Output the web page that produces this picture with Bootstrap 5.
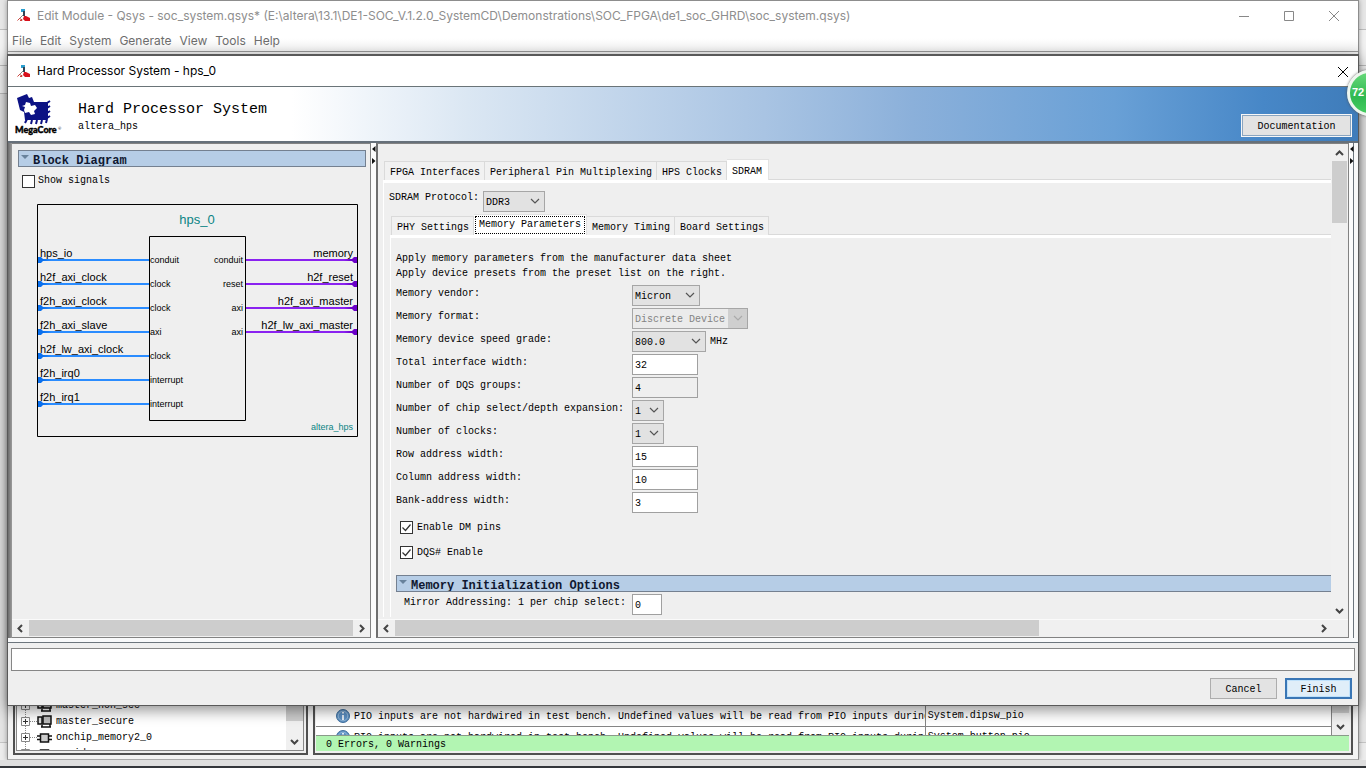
<!DOCTYPE html>
<html lang="en">
<head>
<meta charset="utf-8">
<meta name="viewport" content="width=device-width, initial-scale=1">
<title>Hard Processor System - hps_0</title>
<link href="https://cdn.jsdelivr.net/npm/bootstrap@5.3.0/dist/css/bootstrap.min.css" rel="stylesheet">
<style>
  :root { --face: #efefef; --line: #828282; }
  body { height: 100vh; overflow: hidden; background: #e9e9e9; color: #000;
         font: 10px/14px "Liberation Mono", monospace; }
  button, input, select { font: inherit; color: inherit; }
  .ui-font { font-family: Inter, "Noto Sans", sans-serif; font-size: 12px; line-height: 20px; }

  /* strip of the window behind, either side of the main one */
  .backdrop { background: linear-gradient(#e6e6e6 29px, #bdbdbd 29px 30px, #f1f1f1 30px 65px, #bdbdbd 65px 66px, #f1f1f1 66px 93px, #bdbdbd 93px 94px, #e4e4e4 94px 742px, #c4c4c4 742px 743px, #ececec 743px); }
  .taskbar { height: 2px; background: #33363a; }
  .under { height: 6px; background: #dedede; }

  .main-window { margin: 0 7px; background: #f3f3f3; border: 1px solid #8d8d8d; border-bottom-color: #a9a9a9; box-shadow: 0 0 5px rgba(0,0,0,.35); }
  .main-head { background: #fff; color: #8e8e8e; }
  .caption-bar { height: 29px; padding-left: 9px; }
  .caption-icon { width: 13px; height: 13px; margin-right: 7px; }
  .menu-bar { height: 22px; gap: 8px; padding-left: 4px; border-bottom: 1px solid #999; background: linear-gradient(#fff 8px, #f3f3f3); }
  .menu-bar a { color: #6d6d6d; text-decoration: none; }
  .win-btn { width: 45px; height: 28px; border: 0; background: none; padding: 0; }
  .win-btn:last-child { margin-right: 2px; }
  .dock { height: 70px; padding: 0 5px 4px; gap: 5px; }
  .dock-pane { border: 2px solid #505050; border-width: 1px 2px 2px; padding: 1px 2px 2px 1px; background: var(--face); }
  .tree-pane { width: 295px; flex: none; }
  .tree-box { background: #fff; border: 1px solid #888; border-top: 0; }
  .tree-list { margin: 7px 0 0; padding: 0 0 0 4px; }
  .tree-list li { height: 16px; }
  .tree-list svg:last-of-type { margin-right: 4px; }
  .msg-area { padding-top: 14px; }
  .msg-table { border-collapse: collapse; table-layout: fixed; background: #fff; }
  .msg-table td { height: 21px; border: 1px solid #858585; padding: 0 0 0 2px; white-space: nowrap; overflow: hidden; }
  .msg-table td:first-child { padding-left: 20px; border-left: 0; }
  .status-ok { height: 16px; background: #b2f5b2; padding-left: 10px; line-height: 17px; border-top: 1px solid #8a9a8a; }

  .dialog-window { left: 7px; right: 7px; top: 54px; bottom: 62px; border: 1px solid #595959; border-top-width: 2px; background: var(--face); box-shadow: 0 4px 14px rgba(0,0,0,.45); }
  .dialog-caption { height: 30px; background: #fff; padding-left: 9px; }
  .close-btn { width: 30px; height: 30px; border: 0; background: none; padding: 0; }
  .banner { height: 57px; border-top: 1px solid #6a7478; border-bottom: 2px solid #66707a;
    background: linear-gradient(90deg, #fff 21%, #dbe7f3 34%, #a9c4e3 56%, #8bb0da 67%, #69a0d6 82%, #4787c7 93%, #3f7cba); }
  .banner-logo { width: 52px; height: 54px; margin: 0 14px 0 4px; }
  .banner-text { padding-top: 13px; }
  .banner-title { font-size: 15px; line-height: 20px; }
  .push { height: 23px; background: #e3e3e3; border: 1px solid #adadad; border-radius: 0; padding: 2px 0 0; }
  .push-doc { width: 111px; margin: 0 6px 4px 0; border: 1px solid #f7f7f7; outline: 1px solid #8aa5c0; outline-offset: -2px; }
  .push-end { width: 67px; height: 21px; }
  .push-default { background: #e0eef9; border: 2px solid #3a76b5; outline: 1px solid #bfe1fb; outline-offset: -3px; }

  .work { background: #f8f8f8; }
  .work-rail { width: 4px; background: linear-gradient(90deg, #6c6c6c, #9c9c9c); }
  .left-pane { width: 359px; border: 1px solid var(--line); border-left: 0; background: var(--face); }
  .left-body { padding: 6px 4px 0 6px; }
  .show-row { gap: 3px; margin: 7px 0 0 4px; }
  .diagram { margin: 16px 0 0 19px; }
  .splitter { width: 5px; background: #fbfbfb; padding-top: 2px; }
  .right-pane { min-width: 0; border: 1px solid var(--line); border-left: 2px solid #6f6f6f; background: var(--face); }
  .right-body { padding: 14px 0 0 5px; }
  .group-head { height: 17px; border: 1px solid #748090; background: #b6cde6; overflow: hidden; padding-left: 14px; font-size: 12px; line-height: 20px; font-weight: 700; color: #101830; position: relative; margin: 0; }
  .group-head::before { content: ""; position: absolute; left: 2px; top: 4px; border: 4px solid transparent; border-top-color: #68829c; border-bottom: 0; }
  .group-open { border-right: 0; margin-top: 10px; margin-bottom: 2px; }
  .tick { appearance: none; width: 13px; height: 13px; border: 1px solid #333; background: #fff; margin: 0; flex: none; }
  .tick:checked { background: #fff url("data:image/svg+xml,%3Csvg xmlns='http://www.w3.org/2000/svg' width='11' height='11'%3E%3Cpath d='M1.5 5.5l3 3 5-6' fill='none' stroke='%23333' stroke-width='1.2'/%3E%3C/svg%3E"); }
  .sb { background: #f0f0f0; }
  .sb-h { height: 18px; border-top: 1px solid #fafafa; padding-bottom: 1px; }
  .sb-v { width: 17px; }
  .sb-btn { width: 17px; height: 17px; flex: none; }
  .sb-thumb { background: #cdcdcd; }
  .thumb-wide { width: 70%; }
  .thumb-short { height: 62px; margin: 0 1px; }

  .tabs-row { height: 21px; border: 0; padding-left: 1px; flex-wrap: nowrap; }
  .tabs-row .nav-link { border: 1px solid #dadada; border-left: 0; border-bottom: 0; border-radius: 0; height: 19px; padding: 2px 4px 0 5px; color: #000; background: #f1f1f1; white-space: nowrap; line-height: 17px; }
  .tabs-row li:first-child .nav-link { border-left: 1px solid #dadada; }
  .tabs-row .nav-link.active { height: 21px; background: #fff; padding-right: 6px; color: #000; border-color: #e2e2e2; }
  .tabs-row .nav-link.focus-tab { padding: 0 1px; }
  .focus-tab span { display: block; border: 1px dotted #000; padding: 0 3px; height: 18px; line-height: 16px; }
  .tab-page { border-top: 1px solid #dadada; border-left: 1px solid #fff; }
  .tab-band { height: 3px; background: #fff; }
  .proto-row { padding: 8px 0 0 5px; gap: 4px; }
  .sub-tabs { padding-left: 6px; margin-top: 1px; }
  .sub-body { padding-left: 5px; }
  .intro { margin: 0 0 4px; padding-top: 13px; line-height: 15px; }
  .drop { appearance: none; height: 21px; border: 1px solid #a6a6a6; border-radius: 0; padding: 2px 0 0 2px; width: 100%;
    background: #e2e2e2 url("data:image/svg+xml,%3Csvg xmlns='http://www.w3.org/2000/svg' width='10' height='7'%3E%3Cpath d='M1 1l4 4 4-4' fill='none' stroke='%23555' stroke-width='1.2'/%3E%3C/svg%3E") no-repeat right 4px center; }
  .drop:disabled { color: #838383; opacity: 1; background-color: #cfcfcf; box-shadow: inset 95px 0 0 #ebebeb;
    background-image: url("data:image/svg+xml,%3Csvg xmlns='http://www.w3.org/2000/svg' width='10' height='7'%3E%3Cpath d='M1 1l4 4 4-4' fill='none' stroke='%23aaa' stroke-width='1.2'/%3E%3C/svg%3E"); }
  .field { height: 21px; border: 1px solid #a0a0a0; border-radius: 0; padding: 2px 0 0 2px; background: #fff; width: 66px; }
  .field[readonly] { background: var(--face); }
  .param { display: grid; grid-template-columns: 236px auto; height: 23px; }
  .param label { line-height: 18px; }
  .w-short { width: 32px; } .w-mid { width: 68px; } .w-proto { width: 62px; } .w-speed { width: 74px; } .w-format { width: 116px; }
  .field.w-short { width: 30px; }
  .check-row { height: 25px; padding-left: 4px; gap: 4px; }
  .dialog-foot { padding: 5px 3px 6px; }
  .log-box { height: 23px; border: 1px solid #868686; background: #fff; border-radius: 0; width: 100%; display: block; }
  .foot-btns { padding: 7px 3px 0 0; }
  .speed-ball { right: -27px; top: 70px; width: 46px; height: 46px; border-radius: 50%; border: 3px solid #eef6ee; background: linear-gradient(#66d878, #2fb951 60%, #45cc60); box-shadow: 0 0 3px #555; color: #fff; font: 700 11px/38px "Liberation Sans", sans-serif; padding-left: 2px; }
  .edge-clip { inset: 0; overflow: hidden; pointer-events: none; }
</style>
</head>
<body class="d-flex flex-column backdrop position-relative">

<!-- reusable drawings -->
<svg width="0" height="0" class="position-absolute" aria-hidden="true">
  <symbol id="i-app" viewBox="0 0 13 13"><path d="M4 0h4v3H4z" fill="#2a9fd0"/><path d="M6 2h2v5H6z" fill="#345"/><path d="M6 6 2 10" stroke="#888"/><path d="M7 7h2l4 2v3H8l-2-2z" fill="#d8101c"/><path d="M.5 11.500l2-2 3 1.500M3 11.500h2" fill="none" stroke="#d04038"/></symbol>
  <symbol id="i-x" viewBox="0 0 12 12"><path d="M1 1l10 10M11 1 1 11" fill="none" stroke="currentColor"/></symbol>
  <symbol id="i-l" viewBox="0 0 17 17"><path d="M10 5 6.5 8.500 10 12" fill="none" stroke="#444" stroke-width="2"/></symbol>
  <symbol id="i-r" viewBox="0 0 17 17"><path d="M7 5l3.500 3.500L7 12" fill="none" stroke="#444" stroke-width="2"/></symbol>
  <symbol id="i-u" viewBox="0 0 17 17"><path d="M5 11l3.500-3.500L12 11" fill="none" stroke="#444" stroke-width="2"/></symbol>
  <symbol id="i-d" viewBox="0 0 17 17"><path d="M5 7l3.500 3.500L12 7" fill="none" stroke="#444" stroke-width="2"/></symbol>
  <symbol id="i-plus" viewBox="0 0 16 16"><path d="M4.500 0v16M9 7.500h7" stroke="#888" stroke-dasharray="1 1"/><path d="M.5 3.500h8v8h-8z" fill="#fff" stroke="#888"/><path d="M2 7.500h5M4.500 5v5" stroke="#333"/></symbol>
  <symbol id="i-master" viewBox="0 0 15 14"><path d="M1 2h4v7H1z" fill="#ddd" stroke="#111" stroke-width="1.500"/><path d="M6 1h8v8H6z" fill="#bbb" stroke="#111" stroke-width="1.500"/><path d="M4 12h10M5 10v2M13 9v3" fill="none" stroke="#111" stroke-width="1.500"/></symbol>
  <symbol id="i-chip" viewBox="0 0 15 14"><path d="M0 5h15M0 8.500h15" stroke="#111" stroke-width="1.500"/><path d="M3.500 3h8v8h-8z" fill="#ccc" stroke="#111" stroke-width="1.500"/></symbol>
  <symbol id="i-info" viewBox="0 0 14 14"><circle cx="7" cy="7" r="6.500" fill="#5b8fc2" stroke="#42719f"/><circle cx="7" cy="7" r="4.800" fill="none" stroke="#a9c8e4" stroke-width=".7"/><path d="M7 3v1.500M7 6v5" stroke="#fff" stroke-width="1.600"/></symbol>
  <symbol id="i-split" viewBox="0 0 5 20"><path d="M4.500 1v6L1 4zM1 13v6l3.500-3z" fill="#111"/></symbol>
</svg>

<div class="main-window flex-grow-1 d-flex flex-column">
  <div class="main-head ui-font">
    <div class="caption-bar d-flex align-items-center">
      <svg class="caption-icon"><use href="#i-app"/></svg>
      <span class="flex-grow-1">Edit Module - Qsys - soc_system.qsys* (E:\altera\13.1\DE1-SOC_V.1.2.0_SystemCD\Demonstrations\SOC_FPGA\de1_soc_GHRD\soc_system.qsys)</span>
      <button class="win-btn" aria-label="Minimize"><svg width="12" height="12"><path d="M1 6.500h10" stroke="#888"/></svg></button>
      <button class="win-btn" aria-label="Maximize"><svg width="12" height="12"><path d="M1.500 1.500h9v9h-9z" fill="none" stroke="#888"/></svg></button>
      <button class="win-btn" aria-label="Close main window"><svg width="12" height="12" color="#888"><use href="#i-x"/></svg></button>
    </div>
    <nav class="menu-bar d-flex align-items-center">
      <a href="#">File</a><a href="#">Edit</a><a href="#">System</a><a href="#">Generate</a><a href="#">View</a><a href="#">Tools</a><a href="#">Help</a>
    </nav>
  </div>
  <div class="flex-grow-1"></div>
  <div class="dock d-flex">
    <div class="dock-pane tree-pane">
      <div class="tree-box d-flex h-100 overflow-hidden">
        <ul class="tree-list list-unstyled flex-grow-1">
          <li class="d-flex align-items-center"><svg width="16" height="16"><use href="#i-plus"/></svg><svg width="15" height="14"><use href="#i-master"/></svg>master_non_sec</li>
          <li class="d-flex align-items-center"><svg width="16" height="16"><use href="#i-plus"/></svg><svg width="15" height="14"><use href="#i-master"/></svg>master_secure</li>
          <li class="d-flex align-items-center"><svg width="16" height="16"><use href="#i-plus"/></svg><svg width="15" height="14"><use href="#i-chip"/></svg>onchip_memory2_0</li>
          <li class="d-flex align-items-center"><svg width="16" height="16"><use href="#i-plus"/></svg><svg width="15" height="14"><use href="#i-chip"/></svg>sysid_qsys</li>
        </ul>
        <div class="sb sb-v d-flex flex-column justify-content-between h-100"><div class="sb-thumb h-50"></div><svg class="sb-btn"><use href="#i-d"/></svg></div>
      </div>
    </div>
    <div class="dock-pane flex-grow-1 d-flex flex-column">
      <div class="flex-grow-1 d-flex overflow-hidden">
        <div class="msg-area flex-grow-1 overflow-hidden">
          <table class="msg-table w-100 mb-0">
            <colgroup><col style="width:60%"><col style="width:40%"></colgroup>
            <tr><td><svg width="14" height="14" class="me-1"><use href="#i-info"/></svg>PIO inputs are not hardwired in test bench. Undefined values will be read from PIO inputs during simulation.</td><td>System.dipsw_pio</td></tr>
            <tr><td><svg width="14" height="14" class="me-1"><use href="#i-info"/></svg>PIO inputs are not hardwired in test bench. Undefined values will be read from PIO inputs during simulation.</td><td>System.button_pio</td></tr>
          </table>
        </div>
        <div class="sb sb-v d-flex flex-column justify-content-between"><div class="sb-thumb h-50"></div><svg class="sb-btn"><use href="#i-d"/></svg></div>
      </div>
      <div class="status-ok">0 Errors, 0 Warnings</div>
    </div>
  </div>
</div>
<div class="under"></div>
<div class="taskbar"></div>

<div class="dialog-window position-absolute d-flex flex-column" role="dialog" aria-label="Hard Processor System">
  <div class="dialog-caption ui-font d-flex align-items-center">
    <svg class="caption-icon"><use href="#i-app"/></svg>
    <span class="flex-grow-1">Hard Processor System - hps_0</span>
    <button class="close-btn" aria-label="Close"><svg width="12" height="12"><use href="#i-x"/></svg></button>
  </div>
  <header class="banner d-flex">
    <svg class="banner-logo" viewBox="0 0 52 54" role="img" aria-label="MegaCore">
      <path d="M5 11l10-4 2 4 3-1 2 5h14v17l-2 1H13l-1-8-4-2z" fill="#0c1284"/>
      <path d="M10 19l3-1 1-3 4 1 1 3 4-1 2 3-3 3 1 3-4 1-2-3-4 1-1-3 1-3z" fill="#fff"/>
      <path d="M35 16l3-2M35 21l3-2M35 26l3-2M35 31l3-2M15 32l-2 4M20 33l-1 4M25 33l-1 4M30 33l-1 4M35 32l-1 4" stroke="#0c1284" stroke-width="2"/>
      <text x="3" y="46" font-family="Lato, sans-serif" font-weight="900" font-size="9" stroke="#000" stroke-width=".4">MegaCore</text><text x="46" y="43" font-family="Lato, sans-serif" font-size="4">®</text>
    </svg>
    <div class="banner-text flex-grow-1">
      <h1 class="banner-title fw-normal m-0">Hard Processor System</h1>
      <div>altera_hps</div>
    </div>
    <button class="push push-doc align-self-end">Documentation</button>
  </header>

  <main class="work d-flex flex-grow-1 overflow-hidden">
    <div class="work-rail"></div>
    <section class="left-pane d-flex flex-column">
      <div class="left-body flex-grow-1 overflow-hidden">
        <h2 class="group-head">Block Diagram</h2>
        <div class="show-row d-flex align-items-center"><input type="checkbox" class="tick" id="showSignals"><label for="showSignals">Show signals</label></div>
        <svg id="diagram" class="diagram d-block" width="322" height="234" role="img" aria-label="hps_0 block diagram" font-family="Liberation Sans, sans-serif"></svg>
      </div>
      <div class="sb sb-h d-flex"><svg class="sb-btn"><use href="#i-l"/></svg><div class="sb-thumb flex-grow-1"></div><svg class="sb-btn"><use href="#i-r"/></svg></div>
    </section>
    <div class="splitter"><svg width="5" height="20"><use href="#i-split"/></svg></div>
    <section class="right-pane flex-grow-1 d-flex flex-column">
      <div class="flex-grow-1 d-flex overflow-hidden">
        <div class="right-body flex-grow-1 overflow-hidden">
          <ul class="nav nav-tabs tabs-row align-items-end">
            <li><button class="nav-link">FPGA Interfaces</button></li>
            <li><button class="nav-link">Peripheral Pin Multiplexing</button></li>
            <li><button class="nav-link">HPS Clocks</button></li>
            <li><button class="nav-link active">SDRAM</button></li>
          </ul>
          <div class="tab-page">
            <div class="tab-band"></div>
            <div class="proto-row d-flex"><label for="proto">SDRAM Protocol:</label><div class="w-proto"><select class="drop" id="proto"><option>DDR3</option></select></div></div>
            <div class="sub-tabs">
              <ul class="nav nav-tabs tabs-row align-items-end">
                <li><button class="nav-link">PHY Settings</button></li>
                <li><button class="nav-link active focus-tab"><span>Memory Parameters</span></button></li>
                <li><button class="nav-link">Memory Timing</button></li>
                <li><button class="nav-link">Board Settings</button></li>
              </ul>
              <div class="tab-page">
                <div class="tab-band"></div>
                <div class="sub-body">
                  <p class="intro">Apply memory parameters from the manufacturer data sheet<br>Apply device presets from the preset list on the right.</p>
                  <div class="param"><label for="vendor">Memory vendor:</label><div class="w-mid"><select class="drop" id="vendor"><option>Micron</option></select></div></div>
                  <div class="param"><label for="format">Memory format:</label><div class="w-format"><select class="drop" id="format" disabled><option>Discrete Device</option></select></div></div>
                  <div class="param"><label for="grade">Memory device speed grade:</label><div class="d-flex gap-1"><div class="w-speed"><select class="drop" id="grade"><option>800.0</option></select></div><span class="pt-1">MHz</span></div></div>
                  <div class="param"><label for="width">Total interface width:</label><input class="field" id="width" value="32"></div>
                  <div class="param"><label for="dqs">Number of DQS groups:</label><input class="field" id="dqs" value="4" readonly></div>
                  <div class="param"><label for="chip">Number of chip select/depth expansion:</label><div class="w-short"><select class="drop" id="chip"><option>1</option></select></div></div>
                  <div class="param"><label for="clocks">Number of clocks:</label><div class="w-short"><select class="drop" id="clocks"><option>1</option></select></div></div>
                  <div class="param"><label for="rowW">Row address width:</label><input class="field" id="rowW" value="15"></div>
                  <div class="param"><label for="colW">Column address width:</label><input class="field" id="colW" value="10"></div>
                  <div class="param"><label for="bankW">Bank-address width:</label><input class="field" id="bankW" value="3"></div>
                  <div class="check-row d-flex align-items-center"><input type="checkbox" class="tick" id="dm" checked><label for="dm">Enable DM pins</label></div>
                  <div class="check-row d-flex align-items-center"><input type="checkbox" class="tick" id="dqsEn" checked><label for="dqsEn">DQS# Enable</label></div>
                  <h2 class="group-head group-open">Memory Initialization Options</h2>
                  <div class="param"><label for="mirror" class="ps-2">Mirror Addressing: 1 per chip select:</label><input class="field w-short" id="mirror" value="0"></div>
                </div>
              </div>
            </div>
          </div>
        </div>
        <div class="sb sb-v d-flex flex-column"><svg class="sb-btn"><use href="#i-u"/></svg><div class="sb-thumb thumb-short"></div><svg class="sb-btn mt-auto"><use href="#i-d"/></svg></div>
      </div>
      <div class="sb sb-h d-flex pe-3"><svg class="sb-btn"><use href="#i-l"/></svg><div class="flex-grow-1"><div class="sb-thumb thumb-wide h-100"></div></div><svg class="sb-btn"><use href="#i-r"/></svg></div>
    </section>
    <div class="splitter border-end border-secondary"><svg width="5" height="20"><use href="#i-split"/></svg></div>
    <div class="ps-1"></div>
  </main>
  <div class="pt-1 bg-light"></div>
  <footer class="dialog-foot border-top border-secondary">
    <input class="log-box" aria-label="Messages" readonly>
    <div class="foot-btns d-flex justify-content-end gap-2">
      <button class="push push-end">Cancel</button>
      <button class="push push-end push-default">Finish</button>
    </div>
  </footer>
</div>

<div class="edge-clip position-absolute"><div class="speed-ball position-absolute">72</div></div>

<script src="https://cdn.jsdelivr.net/npm/bootstrap@5.3.0/dist/js/bootstrap.bundle.min.js"></script>
<script>
  // Block diagram: one wire per interface, inputs left, outputs right
  const inputs = [['hps_io','conduit'],['h2f_axi_clock','clock'],['f2h_axi_clock','clock'],['f2h_axi_slave','axi'],['h2f_lw_axi_clock','clock'],['f2h_irq0','interrupt'],['f2h_irq1','interrupt']];
  const outputs = [['memory','conduit'],['h2f_reset','reset'],['h2f_axi_master','axi'],['h2f_lw_axi_master','axi']];
  let s = '<path d="M.5.5h320v232H.5zM112.500 32.500h96v184h-96z" fill="none" stroke="#000"/>' +
    '<text x="160" y="20" font-size="13" text-anchor="middle" fill="#0b8484">hps_0</text>' +
    '<text x="316" y="226" font-size="9" text-anchor="end" fill="#0b8484">altera_hps</text>';
  inputs.forEach(([n, k], i) => {
    const y = 56 + i * 24;
    s += `<path d="M1 ${y}h111" stroke="#2a8cff" stroke-width="2"/><path d="M1 ${y-3}h3l2 2 8 1-8 1-2 2H1z" fill="#0a70ee"/>` +
      `<text x="3" y="${y-3}" font-size="11">${n}</text><text x="113" y="${y+3}" font-size="9">${k}</text>`;
  });
  outputs.forEach(([n, k], i) => {
    const y = 56 + i * 24;
    s += `<path d="M209 ${y}h111" stroke="#8a22f0" stroke-width="2"/><path d="M320 ${y-3}h-3l-2 2-8 1 8 1 2 2h3z" fill="#6a00c8"/>` +
      `<text x="316" y="${y-3}" font-size="11" text-anchor="end">${n}</text><text x="206" y="${y+3}" font-size="9" text-anchor="end">${k}</text>`;
  });
  document.getElementById('diagram').innerHTML = s;
</script>
</body>
</html>
